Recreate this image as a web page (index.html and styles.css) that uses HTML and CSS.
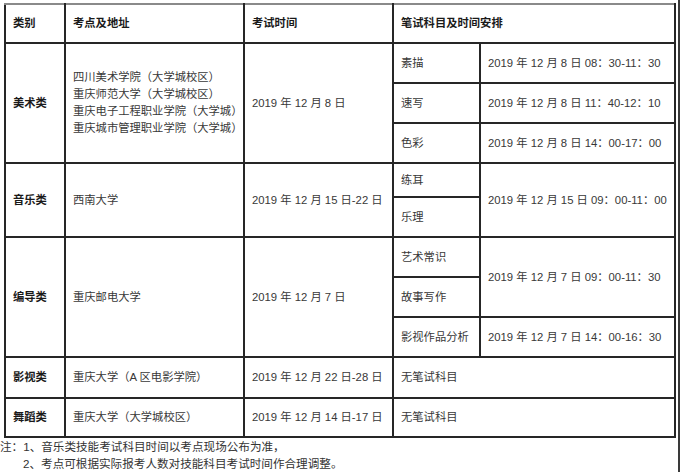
FILE: index.html
```html
<!DOCTYPE html>
<html lang="zh">
<head>
<meta charset="utf-8">
<title>考试安排</title>
<link rel="stylesheet" href="styles.css">
</head>
<body>
<div class="page">
  <table class="sched">
    <colgroup>
      <col class="c1"><col class="c2"><col class="c3"><col class="c4"><col class="c5">
    </colgroup>
    <thead>
      <tr class="rh"><th>类别</th><th>考点及地址</th><th>考试时间</th><th colspan="2">笔试科目及时间安排</th></tr>
    </thead>
    <tbody>
      <tr class="r40"><td rowspan="3" class="cat">美术类</td><td rowspan="3" class="addr">四川美术学院（大学城校区）<br>重庆师范大学（大学城校区）<br>重庆电子工程职业学院（大学城）<br>重庆城市管理职业学院（大学城）</td><td rowspan="3">2019 年 12 月 8 日</td><td>素描</td><td>2019 年 12 月 8 日 08：30-11：30</td></tr>
      <tr class="r40"><td>速写</td><td>2019 年 12 月 8 日 11：40-12：10</td></tr>
      <tr class="r40"><td>色彩</td><td>2019 年 12 月 8 日 14：00-17：00</td></tr>
      <tr class="r34"><td rowspan="2" class="cat">音乐类</td><td rowspan="2">西南大学</td><td rowspan="2">2019 年 12 月 15 日-22 日</td><td>练耳</td><td rowspan="2">2019 年 12 月 15 日 09：00-11：00</td></tr>
      <tr class="r40"><td>乐理</td></tr>
      <tr class="r40"><td rowspan="3" class="cat">编导类</td><td rowspan="3">重庆邮电大学</td><td rowspan="3">2019 年 12 月 7 日</td><td>艺术常识</td><td rowspan="2">2019 年 12 月 7 日 09：00-11：30</td></tr>
      <tr class="r40"><td>故事写作</td></tr>
      <tr class="r40"><td>影视作品分析</td><td>2019 年 12 月 7 日 14：00-16：30</td></tr>
      <tr class="r41"><td class="cat">影视类</td><td>重庆大学（A 区电影学院）</td><td>2019 年 12 月 22 日-28 日</td><td colspan="2">无笔试科目</td></tr>
      <tr class="r39"><td class="cat">舞蹈类</td><td>重庆大学（大学城校区）</td><td>2019 年 12 月 14 日-17 日</td><td colspan="2">无笔试科目</td></tr>
    </tbody>
  </table>
  <div class="notes">
    <p class="note first">注：1、音乐类技能考试科目时间以考点现场公布为准，</p>
    <p class="note">2、考点可根据实际报考人数对技能科目考试时间作合理调整。</p>
  </div>
</div>
</body>
</html>
```
FILE: styles.css
```css
html, body {
  margin: 0;
  padding: 0;
  background: #ffffff;
}
body {
  font-family: "Liberation Sans", "Noto Sans CJK SC", sans-serif;
  color: #383838;
}
.page {
  width: 678px;
  height: 472px;
  border-right: 2px solid #3a3a3a;
  padding-top: 3px;
  box-sizing: content-box;
  overflow: hidden;
}
.sched {
  margin-left: 4px;
  border-collapse: collapse;
  table-layout: fixed;
  width: 672px;
  font-size: 11.3px;
  line-height: 17px;
}
.c1 { width: 60px; }
.c2 { width: 179px; }
.c3 { width: 149px; }
.c4 { width: 87px; }
.c5 { width: 195px; }
.sched th, .sched td {
  border: 2px solid #262626;
  padding: 0 0 0 7px;
  text-align: left;
  vertical-align: middle;
  white-space: nowrap;
}
.sched th {
  font-weight: bold;
  color: #1a1a1a;
}
.sched thead th {
  border-top-color: #8a8a8a;
}
.sched .cat {
  font-weight: bold;
  color: #1a1a1a;
}
.rh { height: 39px; }
.r34 { height: 34px; }
.r39 { height: 39px; }
.r40 { height: 40px; }
.r41 { height: 41px; }
.notes {
  font-size: 11.6px;
  line-height: 17px;
  color: #333333;
}
.note {
  margin: 0;
  padding-left: 23px;
  white-space: nowrap;
}
.note.first {
  padding-left: 0;
}
```
